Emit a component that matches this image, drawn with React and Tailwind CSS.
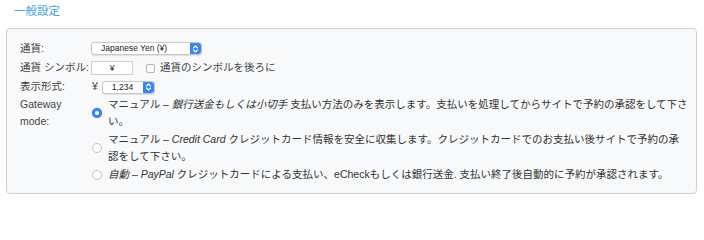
import React from "react";

function Stepper() {
  return (
    <span className="flex h-full w-[11px] items-center justify-center rounded-r-[3px] bg-[#3a86f0]">
      <svg width="7" height="10" viewBox="0 0 7 10" fill="none" stroke="white" strokeWidth="1.1" strokeLinecap="round" strokeLinejoin="round">
        <path d="M1.5 4 L3.5 2 L5.5 4" />
        <path d="M1.5 6 L3.5 8 L5.5 6" />
      </svg>
    </span>
  );
}

function Select({ label, w }) {
  return (
    <div className={`flex h-[13px] items-center rounded-[3px] border border-[#c8c8c8] bg-white shadow-[0_0.5px_1px_rgba(0,0,0,0.1)] ${w}`}>
      <span className="flex-1 pl-[9px] text-[8.5px] leading-none text-[#222]">{label}</span>
      <Stepper />
    </div>
  );
}

function Radio({ checked }) {
  return checked ? (
    <span className="flex h-[10px] w-[10px] shrink-0 items-center justify-center rounded-full bg-[#3b8af2] shadow-[inset_0_0_0_0.5px_#2f74d6]">
      <span className="block h-[3.5px] w-[3.5px] rounded-full bg-white" />
    </span>
  ) : (
    <span className="block h-[10px] w-[10px] shrink-0 rounded-full border border-[#c4c4c4] bg-white" />
  );
}

export default function App() {
  return (
    <div
      className="w-[704px] h-[201px] bg-white text-[10.5px] text-[#333]"
      style={{ fontFamily: '"Liberation Sans", "Noto Sans CJK JP", sans-serif' }}
    >
      <div className="h-[22px] pl-[14px] pt-[4px] text-[11.5px] leading-[14px] text-[#4a9fdc]">一般設定</div>
      <div className="mt-[6px] ml-[6px] mr-[7px] h-[166px] rounded-[4px] border border-[#cfcfcf] bg-[#f8f9fa] pl-[13px] pt-[10px]">
        <div className="flex h-[19px] items-center">
          <div className="w-[71px] shrink-0 text-[#444]">通貨:</div>
          <Select label="Japanese Yen (¥)" w="w-[111px]" />
        </div>
        <div className="flex h-[20px] items-center">
          <div className="w-[71px] shrink-0 text-[#444]">通貨 シンボル:</div>
          <div className="flex h-[14px] w-[42px] items-center justify-center border border-[#d0d0d0] bg-white text-[8.5px] text-[#222]">¥</div>
          <span className="ml-[13px] h-[9px] w-[9px] rounded-[2px] border border-[#b5b5b5] bg-white" />
          <span className="ml-[5px] text-[#444]">通貨のシンボルを後ろに</span>
        </div>
        <div className="flex h-[18px] items-center">
          <div className="w-[71px] shrink-0 text-[#444]">表示形式:</div>
          <span className="ml-[1px] text-[#444]">¥</span>
          <div className="ml-[4px]">
            <Select label="1,234" w="w-[53px]" />
          </div>
        </div>
        <div className="flex leading-[17px]">
          <div className="w-[71px] shrink-0 text-[#444]">
            Gateway
            <br />
            mode:
          </div>
          <div className="flex flex-col gap-[1px]">
            <div className="flex items-center">
              <span className="ml-[1px] mr-[6px]"><Radio checked /></span>
              <div className="whitespace-nowrap">
                マニュアル – <em>銀行送金もしくは小切手</em> 支払い方法のみを表示します。支払いを処理してからサイトで予約の承認をして下さ
                <br />
                い。
              </div>
            </div>
            <div className="flex items-center">
              <span className="ml-[1px] mr-[6px]"><Radio /></span>
              <div className="whitespace-nowrap">
                マニュアル – <em>Credit Card</em> クレジットカード情報を安全に収集します。クレジットカードでのお支払い後サイトで予約の承
                <br />
                認をして下さい。
              </div>
            </div>
            <div className="flex items-center">
              <span className="ml-[1px] mr-[6px]"><Radio /></span>
              <div className="whitespace-nowrap">
                <em>自動 – PayPal</em> クレジットカードによる支払い、eCheckもしくは銀行送金. 支払い終了後自動的に予約が承認されます。
              </div>
            </div>
          </div>
        </div>
      </div>
    </div>
  );
}
